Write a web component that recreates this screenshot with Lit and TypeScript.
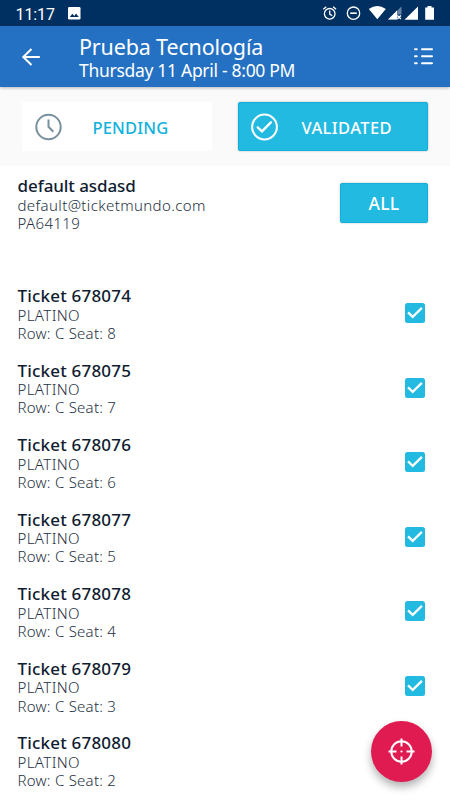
import { LitElement, html, css } from "lit";
import { customElement, property } from "lit/decorators.js";

@customElement("status-bar")
class StatusBar extends LitElement {
  static styles = css`
    :host { display: flex; height: 26px; background: #003061; color: #fff; align-items: center; }
    .time { font: 400 16px/26px Roboto, sans-serif; margin: 3px 0 0 15.5px; width: 52.5px; letter-spacing: -0.1px; }
    svg { display: block; }
    .icons { margin-left: auto; }
  `;
  render() {
    return html`
      <span class="time">11:17</span>
      <svg width="13" height="26" viewBox="0 0 13 26"><rect y="7" width="12.5" height="12.5" rx="1.3" fill="#fff"/><path d="M1.8 17l2.6-3.3 1.9 2.2 1.7-2.5 2.8 3.6z" fill="#003061"/></svg>
      <svg class="icons" width="130" height="26" viewBox="320 0 130 26">
        <g fill="none" stroke="#fff" stroke-width="1.3">
          <circle cx="329.7" cy="13.8" r="5.3"/><path d="M329.7 10.5v3.6l2.5 1.6M323.3 9.3l3-2.6M336.1 9.3l-3-2.6"/>
          <circle cx="353.5" cy="13.2" r="6.2"/><path d="M350.2 13.2h6.6" stroke-width="1.6"/>
        </g>
        <path d="M368.8 9q8.5-5.8 17 0l-8.5 10.3z" fill="#fff"/>
        <path d="M401.5 6.5v8h-4v5h-9.5z" fill="#6685a4"/>
        <path d="M388 19.5l9-9v9z" fill="#fff"/>
        <path d="M397.3 15.5l3.6 3.6m0-3.6l-3.6 3.6" stroke="#fff" stroke-width="1.4"/>
        <path d="M404.5 19.8L418 6.4v13.4z" fill="#fff"/>
        <path d="M425.2 7.4h2.3V6h4v1.4h2.5v12.4h-8.8z" fill="#fff"/>
      </svg>`;
  }
}

@customElement("top-bar")
class TopBar extends LitElement {
  static styles = css`
    :host { display: flex; height: 61px; background: #2471c3; color: #fff; position: relative; box-shadow: 0 1px 3px rgba(0, 0, 0, 0.28); font-family: "Noto Sans", sans-serif; }
    .back { margin: 21px 0 0 21px; width: 58px; height: 20px; }
    .back svg, .menu { display: block; }
    .titles { flex: 1; padding-top: 7px; white-space: nowrap; }
    .title { font-size: 21.5px; line-height: 27px; letter-spacing: -0.15px; }
    .date { font-size: 17.5px; line-height: 20px; letter-spacing: -0.3px; }
    .menu { margin: 21px 17px 0 0; }
  `;
  render() {
    return html`
      <div class="back"><svg width="20" height="20" viewBox="0 0 20 20" fill="none" stroke="#fff" stroke-width="2"><path d="M18.8 10H2.5M10.5 2L2.3 10l8.2 8"/></svg></div>
      <div class="titles"><div class="title">Prueba Tecnología</div><div class="date">Thursday 11 April - 8:00 PM</div></div>
      <svg class="menu" width="19" height="20" viewBox="0 0 19 20" stroke="#fff" stroke-width="2" stroke-linecap="round"><path d="M1 2.2h1.7M8 2.2h10M1 9.2h1.7M8 9.2h10M1 16.2h1.7M8 16.2h10"/></svg>`;
  }
}

@customElement("filter-tabs")
class FilterTabs extends LitElement {
  static styles = css`
    :host { display: flex; justify-content: space-between; height: 79px; background: #fafafa; box-sizing: border-box; padding: 15px 22px 0 22px; font-family: "Noto Sans", sans-serif; }
    .tab { width: 190px; height: 49px; box-sizing: border-box; display: flex; align-items: center; padding-left: 12.5px; background: #fff; color: #10b2dc; font-size: 16.5px; font-weight: 500; line-height: 49px; border-radius: 1px; }
    .tab.active { padding-left: 12px; background: #22bae1; color: #fff; border: 1px solid #12b1dc; border-radius: 2px; box-shadow: 0 0 2px rgba(0, 0, 0, 0.3); }
    .label { margin: 1px 0 0 31px; letter-spacing: 0.15px; }
    .active .label { margin-left: 23.5px; letter-spacing: 0.4px; }
    svg { display: block; }
  `;
  render() {
    return html`
      <div class="tab"><svg width="27" height="28" viewBox="0 0 27 28" fill="none" stroke="#78909c" stroke-width="2"><circle cx="13.5" cy="14" r="12.2"/><path d="M13.5 6.6v7.2l4.8 4.9"/></svg><span class="label">PENDING</span></div>
      <div class="tab active"><svg width="27" height="28" viewBox="0 0 27 28" fill="none" stroke="#fff" stroke-width="2"><circle cx="13.5" cy="14" r="12.4"/><path d="M6.7 14.3l4.3 4.1 8.9-9" stroke-width="2.3" stroke-linecap="round"/></svg><span class="label">VALIDATED</span></div>`;
  }
}

@customElement("ticket-row")
class TicketRow extends LitElement {
  @property() code = "";
  @property() seat = "";
  static styles = css`
    :host { display: flex; justify-content: space-between; height: 74.57px; padding: 0 25px 0 17.5px; color: #0f1c31; font-family: "Noto Sans", sans-serif; }
    .name { font-size: 17px; font-weight: 500; line-height: 20.5px; padding-top: 1px; margin-bottom: -1px; letter-spacing: 0.2px; }
    .sub { font-size: 15px; font-weight: 300; line-height: 18.3px; color: #26313f; letter-spacing: 0.4px; }
    .place { letter-spacing: 0.25px; }
    svg { display: block; margin-top: 18px; }
  `;
  render() {
    return html`
      <div><div class="name">Ticket ${this.code}</div><div class="sub">PLATINO</div><div class="sub place">Row: C Seat: ${this.seat}</div></div>
      <svg width="20" height="20" viewBox="0 0 20 20"><rect width="20" height="20" rx="2.5" fill="#22bae1"/><path d="M3 9.4l4.7 4.5 9.2-9" fill="none" stroke="#fff" stroke-width="2.2"/></svg>`;
  }
}

const tickets = [8, 7, 6, 5, 4, 3, 2].map((seat, i) => ({ code: 678074 + i, seat }));

@customElement("app-root")
class AppRoot extends LitElement {
  static styles = css`
    :host { display: block; position: relative; width: 450px; height: 800px; overflow: hidden; background: #fff; font-family: "Noto Sans", sans-serif; color: #0f1c31; }
    .user { display: flex; justify-content: space-between; height: 119px; box-sizing: border-box; padding: 9.5px 22px 0 17.5px; }
    .name { font-size: 17px; font-weight: 500; line-height: 20.5px; letter-spacing: -0.08px; }
    .sub { font-size: 15px; font-weight: 300; line-height: 18.3px; color: #26313f; letter-spacing: 0.38px; }
    .all { width: 88px; height: 40px; box-sizing: border-box; margin-top: 7.5px; background: #22bae1; border: 1px solid #12b1dc; border-radius: 2px; box-shadow: 0 0 2px rgba(0, 0, 0, 0.3); color: #fff; font-size: 17.5px; font-weight: 500; line-height: 38px; text-align: center; letter-spacing: 0.2px; }
    .fab { position: absolute; right: 18px; bottom: 18px; width: 61px; height: 61px; border-radius: 50%; background: #e01b51; box-shadow: 0 5px 9px rgba(0, 0, 0, 0.3); display: flex; align-items: center; justify-content: center; }
  `;
  render() {
    return html`
      <status-bar></status-bar>
      <top-bar></top-bar>
      <filter-tabs></filter-tabs>
      <div class="user">
        <div><div class="name">default asdasd</div><div class="sub">default@ticketmundo.com</div><div class="sub">PA64119</div></div>
        <div class="all">ALL</div>
      </div>
      ${tickets.map((t) => html`<ticket-row .code=${String(t.code)} .seat=${String(t.seat)}></ticket-row>`)}
      <div class="fab"><svg width="27" height="27" viewBox="0 0 27 27" fill="none" stroke="#fff" stroke-width="2"><circle cx="13.5" cy="13.5" r="10.2"/><path d="M13.5.5v8M13.5 18.5v8M.5 13.5h8M18.5 13.5h8"/><circle cx="13.5" cy="13.5" r="1.1" fill="#fff" stroke="none"/></svg></div>`;
  }
}
